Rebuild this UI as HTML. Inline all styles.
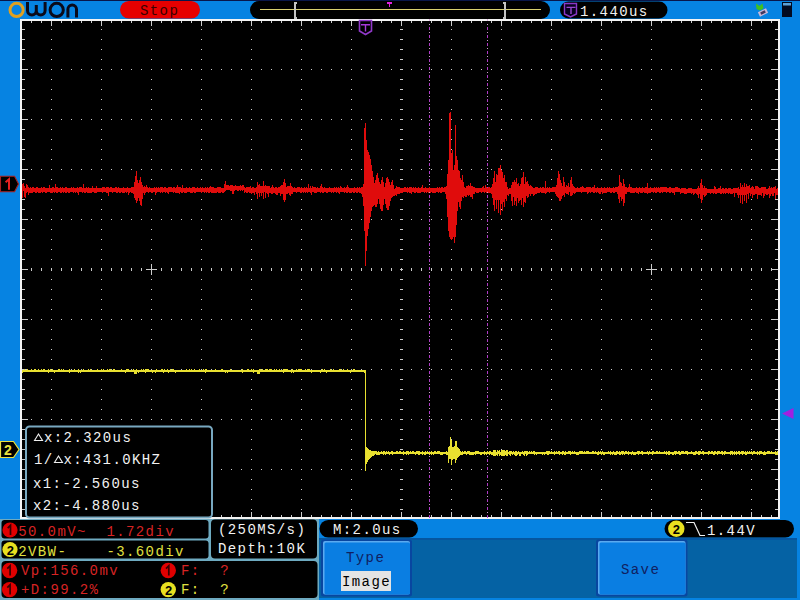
<!DOCTYPE html>
<html><head><meta charset="utf-8"><style>
html,body{margin:0;padding:0;width:800px;height:600px;overflow:hidden;background:#0683e2}
svg{display:block}
text{font-family:'Liberation Mono',monospace;font-size:14px;letter-spacing:1.4px;white-space:pre}
.cd{font-family:'Liberation Sans',sans-serif;font-weight:bold;font-size:13px;letter-spacing:0;text-anchor:middle}
</style></head><body>
<svg width="800" height="600" viewBox="0 0 800 600">
<rect x="0" y="0" width="800" height="1" fill="#08164a"/>
<!-- logo -->
<g fill="none" stroke-width="3">
<circle cx="16.6" cy="9.9" r="6.6" stroke="#e0a020"/>
<path d="M27.5 2v8.5a4.4 4.4 0 0 0 8.8 0V5 M36.3 5v5.5a4.4 4.4 0 0 0 8.8 0V2" stroke="#0a0a1a"/>
<circle cx="56.7" cy="9.9" r="6.6" stroke="#0a0a1a"/>
<path d="M67.9 17.5V9.3a4.3 4.3 0 0 1 8.6 0v8.2" stroke="#0a0a1a"/>
</g>
<!-- Stop pill -->
<rect x="120" y="1" width="80" height="17.5" rx="8.75" fill="#e60000"/>
<text x="140" y="15" fill="#3a0000">Stop</text>
<!-- timebase pill -->
<rect x="250" y="1" width="300" height="18" rx="9" fill="#000"/>
<rect x="260" y="9" width="281" height="1" fill="#d8d070"/>
<path d="M294 2h3v2h-1v13h1v2h-3z" fill="#c4c4c4" shape-rendering="crispEdges"/>
<path d="M503 2h3v17h-3v-2h1v-13h-1z" fill="#c4c4c4" shape-rendering="crispEdges"/>
<path d="M387 2h5v2h-2v3h-1v-3h-2z" fill="#e020e0"/>
<!-- trigger pos pill -->
<rect x="560" y="1.5" width="107.5" height="17" rx="8.5" fill="#000"/>
<path d="M564.5 3.5h12v10.5l-6 3l-6-3z" fill="#080020" stroke="#8a38c8" stroke-width="1.4"/>
<path d="M566.5 6.8h9v1.3h-3.8v5.8h-1.4v-5.8h-3.8z" fill="#9a48d0"/>
<text x="580" y="15.5" fill="#f2f2f2">1.440us</text>
<!-- usb icon -->
<path d="M756 3.5L759.5 6L762.5 3.5L763.5 8.5L760 10.5L756.5 9z" fill="#40c020"/>
<g transform="rotate(-25 763 12.5)"><rect x="758.5" y="10" width="9" height="5" fill="#c8b8d8"/><rect x="760.5" y="11.2" width="5" height="2.6" fill="#403860"/></g>
<!-- battery -->
<rect x="782" y="2" width="10" height="15" fill="#020a20"/>
<rect x="783" y="3" width="8" height="2.5" fill="#5aa0d8"/>

<!-- grid -->
<rect x="20" y="19" width="760" height="500" fill="#f4f4f4"/>
<rect x="22" y="21" width="756" height="496" fill="#000"/>
<path d="M51 29h1v1h-1zM51 39h1v1h-1zM51 49h1v1h-1zM51 59h1v1h-1zM51 69h1v1h-1zM51 79h1v1h-1zM51 89h1v1h-1zM51 99h1v1h-1zM51 109h1v1h-1zM51 119h1v1h-1zM51 129h1v1h-1zM51 139h1v1h-1zM51 149h1v1h-1zM51 159h1v1h-1zM51 169h1v1h-1zM51 179h1v1h-1zM51 189h1v1h-1zM51 199h1v1h-1zM51 209h1v1h-1zM51 219h1v1h-1zM51 229h1v1h-1zM51 239h1v1h-1zM51 249h1v1h-1zM51 259h1v1h-1zM51 269h1v1h-1zM51 279h1v1h-1zM51 289h1v1h-1zM51 299h1v1h-1zM51 309h1v1h-1zM51 319h1v1h-1zM51 329h1v1h-1zM51 339h1v1h-1zM51 349h1v1h-1zM51 359h1v1h-1zM51 369h1v1h-1zM51 379h1v1h-1zM51 389h1v1h-1zM51 399h1v1h-1zM51 409h1v1h-1zM51 419h1v1h-1zM51 429h1v1h-1zM51 439h1v1h-1zM51 449h1v1h-1zM51 459h1v1h-1zM51 469h1v1h-1zM51 479h1v1h-1zM51 489h1v1h-1zM51 499h1v1h-1zM51 509h1v1h-1zM101 29h1v1h-1zM101 39h1v1h-1zM101 49h1v1h-1zM101 59h1v1h-1zM101 69h1v1h-1zM101 79h1v1h-1zM101 89h1v1h-1zM101 99h1v1h-1zM101 109h1v1h-1zM101 119h1v1h-1zM101 129h1v1h-1zM101 139h1v1h-1zM101 149h1v1h-1zM101 159h1v1h-1zM101 169h1v1h-1zM101 179h1v1h-1zM101 189h1v1h-1zM101 199h1v1h-1zM101 209h1v1h-1zM101 219h1v1h-1zM101 229h1v1h-1zM101 239h1v1h-1zM101 249h1v1h-1zM101 259h1v1h-1zM101 269h1v1h-1zM101 279h1v1h-1zM101 289h1v1h-1zM101 299h1v1h-1zM101 309h1v1h-1zM101 319h1v1h-1zM101 329h1v1h-1zM101 339h1v1h-1zM101 349h1v1h-1zM101 359h1v1h-1zM101 369h1v1h-1zM101 379h1v1h-1zM101 389h1v1h-1zM101 399h1v1h-1zM101 409h1v1h-1zM101 419h1v1h-1zM101 429h1v1h-1zM101 439h1v1h-1zM101 449h1v1h-1zM101 459h1v1h-1zM101 469h1v1h-1zM101 479h1v1h-1zM101 489h1v1h-1zM101 499h1v1h-1zM101 509h1v1h-1zM151 29h1v1h-1zM151 39h1v1h-1zM151 49h1v1h-1zM151 59h1v1h-1zM151 69h1v1h-1zM151 79h1v1h-1zM151 89h1v1h-1zM151 99h1v1h-1zM151 109h1v1h-1zM151 119h1v1h-1zM151 129h1v1h-1zM151 139h1v1h-1zM151 149h1v1h-1zM151 159h1v1h-1zM151 169h1v1h-1zM151 179h1v1h-1zM151 189h1v1h-1zM151 199h1v1h-1zM151 209h1v1h-1zM151 219h1v1h-1zM151 229h1v1h-1zM151 239h1v1h-1zM151 249h1v1h-1zM151 259h1v1h-1zM151 269h1v1h-1zM151 279h1v1h-1zM151 289h1v1h-1zM151 299h1v1h-1zM151 309h1v1h-1zM151 319h1v1h-1zM151 329h1v1h-1zM151 339h1v1h-1zM151 349h1v1h-1zM151 359h1v1h-1zM151 369h1v1h-1zM151 379h1v1h-1zM151 389h1v1h-1zM151 399h1v1h-1zM151 409h1v1h-1zM151 419h1v1h-1zM151 429h1v1h-1zM151 439h1v1h-1zM151 449h1v1h-1zM151 459h1v1h-1zM151 469h1v1h-1zM151 479h1v1h-1zM151 489h1v1h-1zM151 499h1v1h-1zM151 509h1v1h-1zM201 29h1v1h-1zM201 39h1v1h-1zM201 49h1v1h-1zM201 59h1v1h-1zM201 69h1v1h-1zM201 79h1v1h-1zM201 89h1v1h-1zM201 99h1v1h-1zM201 109h1v1h-1zM201 119h1v1h-1zM201 129h1v1h-1zM201 139h1v1h-1zM201 149h1v1h-1zM201 159h1v1h-1zM201 169h1v1h-1zM201 179h1v1h-1zM201 189h1v1h-1zM201 199h1v1h-1zM201 209h1v1h-1zM201 219h1v1h-1zM201 229h1v1h-1zM201 239h1v1h-1zM201 249h1v1h-1zM201 259h1v1h-1zM201 269h1v1h-1zM201 279h1v1h-1zM201 289h1v1h-1zM201 299h1v1h-1zM201 309h1v1h-1zM201 319h1v1h-1zM201 329h1v1h-1zM201 339h1v1h-1zM201 349h1v1h-1zM201 359h1v1h-1zM201 369h1v1h-1zM201 379h1v1h-1zM201 389h1v1h-1zM201 399h1v1h-1zM201 409h1v1h-1zM201 419h1v1h-1zM201 429h1v1h-1zM201 439h1v1h-1zM201 449h1v1h-1zM201 459h1v1h-1zM201 469h1v1h-1zM201 479h1v1h-1zM201 489h1v1h-1zM201 499h1v1h-1zM201 509h1v1h-1zM251 29h1v1h-1zM251 39h1v1h-1zM251 49h1v1h-1zM251 59h1v1h-1zM251 69h1v1h-1zM251 79h1v1h-1zM251 89h1v1h-1zM251 99h1v1h-1zM251 109h1v1h-1zM251 119h1v1h-1zM251 129h1v1h-1zM251 139h1v1h-1zM251 149h1v1h-1zM251 159h1v1h-1zM251 169h1v1h-1zM251 179h1v1h-1zM251 189h1v1h-1zM251 199h1v1h-1zM251 209h1v1h-1zM251 219h1v1h-1zM251 229h1v1h-1zM251 239h1v1h-1zM251 249h1v1h-1zM251 259h1v1h-1zM251 269h1v1h-1zM251 279h1v1h-1zM251 289h1v1h-1zM251 299h1v1h-1zM251 309h1v1h-1zM251 319h1v1h-1zM251 329h1v1h-1zM251 339h1v1h-1zM251 349h1v1h-1zM251 359h1v1h-1zM251 369h1v1h-1zM251 379h1v1h-1zM251 389h1v1h-1zM251 399h1v1h-1zM251 409h1v1h-1zM251 419h1v1h-1zM251 429h1v1h-1zM251 439h1v1h-1zM251 449h1v1h-1zM251 459h1v1h-1zM251 469h1v1h-1zM251 479h1v1h-1zM251 489h1v1h-1zM251 499h1v1h-1zM251 509h1v1h-1zM301 29h1v1h-1zM301 39h1v1h-1zM301 49h1v1h-1zM301 59h1v1h-1zM301 69h1v1h-1zM301 79h1v1h-1zM301 89h1v1h-1zM301 99h1v1h-1zM301 109h1v1h-1zM301 119h1v1h-1zM301 129h1v1h-1zM301 139h1v1h-1zM301 149h1v1h-1zM301 159h1v1h-1zM301 169h1v1h-1zM301 179h1v1h-1zM301 189h1v1h-1zM301 199h1v1h-1zM301 209h1v1h-1zM301 219h1v1h-1zM301 229h1v1h-1zM301 239h1v1h-1zM301 249h1v1h-1zM301 259h1v1h-1zM301 269h1v1h-1zM301 279h1v1h-1zM301 289h1v1h-1zM301 299h1v1h-1zM301 309h1v1h-1zM301 319h1v1h-1zM301 329h1v1h-1zM301 339h1v1h-1zM301 349h1v1h-1zM301 359h1v1h-1zM301 369h1v1h-1zM301 379h1v1h-1zM301 389h1v1h-1zM301 399h1v1h-1zM301 409h1v1h-1zM301 419h1v1h-1zM301 429h1v1h-1zM301 439h1v1h-1zM301 449h1v1h-1zM301 459h1v1h-1zM301 469h1v1h-1zM301 479h1v1h-1zM301 489h1v1h-1zM301 499h1v1h-1zM301 509h1v1h-1zM351 29h1v1h-1zM351 39h1v1h-1zM351 49h1v1h-1zM351 59h1v1h-1zM351 69h1v1h-1zM351 79h1v1h-1zM351 89h1v1h-1zM351 99h1v1h-1zM351 109h1v1h-1zM351 119h1v1h-1zM351 129h1v1h-1zM351 139h1v1h-1zM351 149h1v1h-1zM351 159h1v1h-1zM351 169h1v1h-1zM351 179h1v1h-1zM351 189h1v1h-1zM351 199h1v1h-1zM351 209h1v1h-1zM351 219h1v1h-1zM351 229h1v1h-1zM351 239h1v1h-1zM351 249h1v1h-1zM351 259h1v1h-1zM351 269h1v1h-1zM351 279h1v1h-1zM351 289h1v1h-1zM351 299h1v1h-1zM351 309h1v1h-1zM351 319h1v1h-1zM351 329h1v1h-1zM351 339h1v1h-1zM351 349h1v1h-1zM351 359h1v1h-1zM351 369h1v1h-1zM351 379h1v1h-1zM351 389h1v1h-1zM351 399h1v1h-1zM351 409h1v1h-1zM351 419h1v1h-1zM351 429h1v1h-1zM351 439h1v1h-1zM351 449h1v1h-1zM351 459h1v1h-1zM351 469h1v1h-1zM351 479h1v1h-1zM351 489h1v1h-1zM351 499h1v1h-1zM351 509h1v1h-1zM451 29h1v1h-1zM451 39h1v1h-1zM451 49h1v1h-1zM451 59h1v1h-1zM451 69h1v1h-1zM451 79h1v1h-1zM451 89h1v1h-1zM451 99h1v1h-1zM451 109h1v1h-1zM451 119h1v1h-1zM451 129h1v1h-1zM451 139h1v1h-1zM451 149h1v1h-1zM451 159h1v1h-1zM451 169h1v1h-1zM451 179h1v1h-1zM451 189h1v1h-1zM451 199h1v1h-1zM451 209h1v1h-1zM451 219h1v1h-1zM451 229h1v1h-1zM451 239h1v1h-1zM451 249h1v1h-1zM451 259h1v1h-1zM451 269h1v1h-1zM451 279h1v1h-1zM451 289h1v1h-1zM451 299h1v1h-1zM451 309h1v1h-1zM451 319h1v1h-1zM451 329h1v1h-1zM451 339h1v1h-1zM451 349h1v1h-1zM451 359h1v1h-1zM451 369h1v1h-1zM451 379h1v1h-1zM451 389h1v1h-1zM451 399h1v1h-1zM451 409h1v1h-1zM451 419h1v1h-1zM451 429h1v1h-1zM451 439h1v1h-1zM451 449h1v1h-1zM451 459h1v1h-1zM451 469h1v1h-1zM451 479h1v1h-1zM451 489h1v1h-1zM451 499h1v1h-1zM451 509h1v1h-1zM501 29h1v1h-1zM501 39h1v1h-1zM501 49h1v1h-1zM501 59h1v1h-1zM501 69h1v1h-1zM501 79h1v1h-1zM501 89h1v1h-1zM501 99h1v1h-1zM501 109h1v1h-1zM501 119h1v1h-1zM501 129h1v1h-1zM501 139h1v1h-1zM501 149h1v1h-1zM501 159h1v1h-1zM501 169h1v1h-1zM501 179h1v1h-1zM501 189h1v1h-1zM501 199h1v1h-1zM501 209h1v1h-1zM501 219h1v1h-1zM501 229h1v1h-1zM501 239h1v1h-1zM501 249h1v1h-1zM501 259h1v1h-1zM501 269h1v1h-1zM501 279h1v1h-1zM501 289h1v1h-1zM501 299h1v1h-1zM501 309h1v1h-1zM501 319h1v1h-1zM501 329h1v1h-1zM501 339h1v1h-1zM501 349h1v1h-1zM501 359h1v1h-1zM501 369h1v1h-1zM501 379h1v1h-1zM501 389h1v1h-1zM501 399h1v1h-1zM501 409h1v1h-1zM501 419h1v1h-1zM501 429h1v1h-1zM501 439h1v1h-1zM501 449h1v1h-1zM501 459h1v1h-1zM501 469h1v1h-1zM501 479h1v1h-1zM501 489h1v1h-1zM501 499h1v1h-1zM501 509h1v1h-1zM551 29h1v1h-1zM551 39h1v1h-1zM551 49h1v1h-1zM551 59h1v1h-1zM551 69h1v1h-1zM551 79h1v1h-1zM551 89h1v1h-1zM551 99h1v1h-1zM551 109h1v1h-1zM551 119h1v1h-1zM551 129h1v1h-1zM551 139h1v1h-1zM551 149h1v1h-1zM551 159h1v1h-1zM551 169h1v1h-1zM551 179h1v1h-1zM551 189h1v1h-1zM551 199h1v1h-1zM551 209h1v1h-1zM551 219h1v1h-1zM551 229h1v1h-1zM551 239h1v1h-1zM551 249h1v1h-1zM551 259h1v1h-1zM551 269h1v1h-1zM551 279h1v1h-1zM551 289h1v1h-1zM551 299h1v1h-1zM551 309h1v1h-1zM551 319h1v1h-1zM551 329h1v1h-1zM551 339h1v1h-1zM551 349h1v1h-1zM551 359h1v1h-1zM551 369h1v1h-1zM551 379h1v1h-1zM551 389h1v1h-1zM551 399h1v1h-1zM551 409h1v1h-1zM551 419h1v1h-1zM551 429h1v1h-1zM551 439h1v1h-1zM551 449h1v1h-1zM551 459h1v1h-1zM551 469h1v1h-1zM551 479h1v1h-1zM551 489h1v1h-1zM551 499h1v1h-1zM551 509h1v1h-1zM601 29h1v1h-1zM601 39h1v1h-1zM601 49h1v1h-1zM601 59h1v1h-1zM601 69h1v1h-1zM601 79h1v1h-1zM601 89h1v1h-1zM601 99h1v1h-1zM601 109h1v1h-1zM601 119h1v1h-1zM601 129h1v1h-1zM601 139h1v1h-1zM601 149h1v1h-1zM601 159h1v1h-1zM601 169h1v1h-1zM601 179h1v1h-1zM601 189h1v1h-1zM601 199h1v1h-1zM601 209h1v1h-1zM601 219h1v1h-1zM601 229h1v1h-1zM601 239h1v1h-1zM601 249h1v1h-1zM601 259h1v1h-1zM601 269h1v1h-1zM601 279h1v1h-1zM601 289h1v1h-1zM601 299h1v1h-1zM601 309h1v1h-1zM601 319h1v1h-1zM601 329h1v1h-1zM601 339h1v1h-1zM601 349h1v1h-1zM601 359h1v1h-1zM601 369h1v1h-1zM601 379h1v1h-1zM601 389h1v1h-1zM601 399h1v1h-1zM601 409h1v1h-1zM601 419h1v1h-1zM601 429h1v1h-1zM601 439h1v1h-1zM601 449h1v1h-1zM601 459h1v1h-1zM601 469h1v1h-1zM601 479h1v1h-1zM601 489h1v1h-1zM601 499h1v1h-1zM601 509h1v1h-1zM651 29h1v1h-1zM651 39h1v1h-1zM651 49h1v1h-1zM651 59h1v1h-1zM651 69h1v1h-1zM651 79h1v1h-1zM651 89h1v1h-1zM651 99h1v1h-1zM651 109h1v1h-1zM651 119h1v1h-1zM651 129h1v1h-1zM651 139h1v1h-1zM651 149h1v1h-1zM651 159h1v1h-1zM651 169h1v1h-1zM651 179h1v1h-1zM651 189h1v1h-1zM651 199h1v1h-1zM651 209h1v1h-1zM651 219h1v1h-1zM651 229h1v1h-1zM651 239h1v1h-1zM651 249h1v1h-1zM651 259h1v1h-1zM651 269h1v1h-1zM651 279h1v1h-1zM651 289h1v1h-1zM651 299h1v1h-1zM651 309h1v1h-1zM651 319h1v1h-1zM651 329h1v1h-1zM651 339h1v1h-1zM651 349h1v1h-1zM651 359h1v1h-1zM651 369h1v1h-1zM651 379h1v1h-1zM651 389h1v1h-1zM651 399h1v1h-1zM651 409h1v1h-1zM651 419h1v1h-1zM651 429h1v1h-1zM651 439h1v1h-1zM651 449h1v1h-1zM651 459h1v1h-1zM651 469h1v1h-1zM651 479h1v1h-1zM651 489h1v1h-1zM651 499h1v1h-1zM651 509h1v1h-1zM701 29h1v1h-1zM701 39h1v1h-1zM701 49h1v1h-1zM701 59h1v1h-1zM701 69h1v1h-1zM701 79h1v1h-1zM701 89h1v1h-1zM701 99h1v1h-1zM701 109h1v1h-1zM701 119h1v1h-1zM701 129h1v1h-1zM701 139h1v1h-1zM701 149h1v1h-1zM701 159h1v1h-1zM701 169h1v1h-1zM701 179h1v1h-1zM701 189h1v1h-1zM701 199h1v1h-1zM701 209h1v1h-1zM701 219h1v1h-1zM701 229h1v1h-1zM701 239h1v1h-1zM701 249h1v1h-1zM701 259h1v1h-1zM701 269h1v1h-1zM701 279h1v1h-1zM701 289h1v1h-1zM701 299h1v1h-1zM701 309h1v1h-1zM701 319h1v1h-1zM701 329h1v1h-1zM701 339h1v1h-1zM701 349h1v1h-1zM701 359h1v1h-1zM701 369h1v1h-1zM701 379h1v1h-1zM701 389h1v1h-1zM701 399h1v1h-1zM701 409h1v1h-1zM701 419h1v1h-1zM701 429h1v1h-1zM701 439h1v1h-1zM701 449h1v1h-1zM701 459h1v1h-1zM701 469h1v1h-1zM701 479h1v1h-1zM701 489h1v1h-1zM701 499h1v1h-1zM701 509h1v1h-1zM751 29h1v1h-1zM751 39h1v1h-1zM751 49h1v1h-1zM751 59h1v1h-1zM751 69h1v1h-1zM751 79h1v1h-1zM751 89h1v1h-1zM751 99h1v1h-1zM751 109h1v1h-1zM751 119h1v1h-1zM751 129h1v1h-1zM751 139h1v1h-1zM751 149h1v1h-1zM751 159h1v1h-1zM751 169h1v1h-1zM751 179h1v1h-1zM751 189h1v1h-1zM751 199h1v1h-1zM751 209h1v1h-1zM751 219h1v1h-1zM751 229h1v1h-1zM751 239h1v1h-1zM751 249h1v1h-1zM751 259h1v1h-1zM751 269h1v1h-1zM751 279h1v1h-1zM751 289h1v1h-1zM751 299h1v1h-1zM751 309h1v1h-1zM751 319h1v1h-1zM751 329h1v1h-1zM751 339h1v1h-1zM751 349h1v1h-1zM751 359h1v1h-1zM751 369h1v1h-1zM751 379h1v1h-1zM751 389h1v1h-1zM751 399h1v1h-1zM751 409h1v1h-1zM751 419h1v1h-1zM751 429h1v1h-1zM751 439h1v1h-1zM751 449h1v1h-1zM751 459h1v1h-1zM751 469h1v1h-1zM751 479h1v1h-1zM751 489h1v1h-1zM751 499h1v1h-1zM751 509h1v1h-1zM31 69h1v1h-1zM41 69h1v1h-1zM61 69h1v1h-1zM71 69h1v1h-1zM81 69h1v1h-1zM91 69h1v1h-1zM111 69h1v1h-1zM121 69h1v1h-1zM131 69h1v1h-1zM141 69h1v1h-1zM161 69h1v1h-1zM171 69h1v1h-1zM181 69h1v1h-1zM191 69h1v1h-1zM211 69h1v1h-1zM221 69h1v1h-1zM231 69h1v1h-1zM241 69h1v1h-1zM261 69h1v1h-1zM271 69h1v1h-1zM281 69h1v1h-1zM291 69h1v1h-1zM311 69h1v1h-1zM321 69h1v1h-1zM331 69h1v1h-1zM341 69h1v1h-1zM361 69h1v1h-1zM371 69h1v1h-1zM381 69h1v1h-1zM391 69h1v1h-1zM411 69h1v1h-1zM421 69h1v1h-1zM431 69h1v1h-1zM441 69h1v1h-1zM461 69h1v1h-1zM471 69h1v1h-1zM481 69h1v1h-1zM491 69h1v1h-1zM511 69h1v1h-1zM521 69h1v1h-1zM531 69h1v1h-1zM541 69h1v1h-1zM561 69h1v1h-1zM571 69h1v1h-1zM581 69h1v1h-1zM591 69h1v1h-1zM611 69h1v1h-1zM621 69h1v1h-1zM631 69h1v1h-1zM641 69h1v1h-1zM661 69h1v1h-1zM671 69h1v1h-1zM681 69h1v1h-1zM691 69h1v1h-1zM711 69h1v1h-1zM721 69h1v1h-1zM731 69h1v1h-1zM741 69h1v1h-1zM761 69h1v1h-1zM771 69h1v1h-1zM31 119h1v1h-1zM41 119h1v1h-1zM61 119h1v1h-1zM71 119h1v1h-1zM81 119h1v1h-1zM91 119h1v1h-1zM111 119h1v1h-1zM121 119h1v1h-1zM131 119h1v1h-1zM141 119h1v1h-1zM161 119h1v1h-1zM171 119h1v1h-1zM181 119h1v1h-1zM191 119h1v1h-1zM211 119h1v1h-1zM221 119h1v1h-1zM231 119h1v1h-1zM241 119h1v1h-1zM261 119h1v1h-1zM271 119h1v1h-1zM281 119h1v1h-1zM291 119h1v1h-1zM311 119h1v1h-1zM321 119h1v1h-1zM331 119h1v1h-1zM341 119h1v1h-1zM361 119h1v1h-1zM371 119h1v1h-1zM381 119h1v1h-1zM391 119h1v1h-1zM411 119h1v1h-1zM421 119h1v1h-1zM431 119h1v1h-1zM441 119h1v1h-1zM461 119h1v1h-1zM471 119h1v1h-1zM481 119h1v1h-1zM491 119h1v1h-1zM511 119h1v1h-1zM521 119h1v1h-1zM531 119h1v1h-1zM541 119h1v1h-1zM561 119h1v1h-1zM571 119h1v1h-1zM581 119h1v1h-1zM591 119h1v1h-1zM611 119h1v1h-1zM621 119h1v1h-1zM631 119h1v1h-1zM641 119h1v1h-1zM661 119h1v1h-1zM671 119h1v1h-1zM681 119h1v1h-1zM691 119h1v1h-1zM711 119h1v1h-1zM721 119h1v1h-1zM731 119h1v1h-1zM741 119h1v1h-1zM761 119h1v1h-1zM771 119h1v1h-1zM31 169h1v1h-1zM41 169h1v1h-1zM61 169h1v1h-1zM71 169h1v1h-1zM81 169h1v1h-1zM91 169h1v1h-1zM111 169h1v1h-1zM121 169h1v1h-1zM131 169h1v1h-1zM141 169h1v1h-1zM161 169h1v1h-1zM171 169h1v1h-1zM181 169h1v1h-1zM191 169h1v1h-1zM211 169h1v1h-1zM221 169h1v1h-1zM231 169h1v1h-1zM241 169h1v1h-1zM261 169h1v1h-1zM271 169h1v1h-1zM281 169h1v1h-1zM291 169h1v1h-1zM311 169h1v1h-1zM321 169h1v1h-1zM331 169h1v1h-1zM341 169h1v1h-1zM361 169h1v1h-1zM371 169h1v1h-1zM381 169h1v1h-1zM391 169h1v1h-1zM411 169h1v1h-1zM421 169h1v1h-1zM431 169h1v1h-1zM441 169h1v1h-1zM461 169h1v1h-1zM471 169h1v1h-1zM481 169h1v1h-1zM491 169h1v1h-1zM511 169h1v1h-1zM521 169h1v1h-1zM531 169h1v1h-1zM541 169h1v1h-1zM561 169h1v1h-1zM571 169h1v1h-1zM581 169h1v1h-1zM591 169h1v1h-1zM611 169h1v1h-1zM621 169h1v1h-1zM631 169h1v1h-1zM641 169h1v1h-1zM661 169h1v1h-1zM671 169h1v1h-1zM681 169h1v1h-1zM691 169h1v1h-1zM711 169h1v1h-1zM721 169h1v1h-1zM731 169h1v1h-1zM741 169h1v1h-1zM761 169h1v1h-1zM771 169h1v1h-1zM31 219h1v1h-1zM41 219h1v1h-1zM61 219h1v1h-1zM71 219h1v1h-1zM81 219h1v1h-1zM91 219h1v1h-1zM111 219h1v1h-1zM121 219h1v1h-1zM131 219h1v1h-1zM141 219h1v1h-1zM161 219h1v1h-1zM171 219h1v1h-1zM181 219h1v1h-1zM191 219h1v1h-1zM211 219h1v1h-1zM221 219h1v1h-1zM231 219h1v1h-1zM241 219h1v1h-1zM261 219h1v1h-1zM271 219h1v1h-1zM281 219h1v1h-1zM291 219h1v1h-1zM311 219h1v1h-1zM321 219h1v1h-1zM331 219h1v1h-1zM341 219h1v1h-1zM361 219h1v1h-1zM371 219h1v1h-1zM381 219h1v1h-1zM391 219h1v1h-1zM411 219h1v1h-1zM421 219h1v1h-1zM431 219h1v1h-1zM441 219h1v1h-1zM461 219h1v1h-1zM471 219h1v1h-1zM481 219h1v1h-1zM491 219h1v1h-1zM511 219h1v1h-1zM521 219h1v1h-1zM531 219h1v1h-1zM541 219h1v1h-1zM561 219h1v1h-1zM571 219h1v1h-1zM581 219h1v1h-1zM591 219h1v1h-1zM611 219h1v1h-1zM621 219h1v1h-1zM631 219h1v1h-1zM641 219h1v1h-1zM661 219h1v1h-1zM671 219h1v1h-1zM681 219h1v1h-1zM691 219h1v1h-1zM711 219h1v1h-1zM721 219h1v1h-1zM731 219h1v1h-1zM741 219h1v1h-1zM761 219h1v1h-1zM771 219h1v1h-1zM31 319h1v1h-1zM41 319h1v1h-1zM61 319h1v1h-1zM71 319h1v1h-1zM81 319h1v1h-1zM91 319h1v1h-1zM111 319h1v1h-1zM121 319h1v1h-1zM131 319h1v1h-1zM141 319h1v1h-1zM161 319h1v1h-1zM171 319h1v1h-1zM181 319h1v1h-1zM191 319h1v1h-1zM211 319h1v1h-1zM221 319h1v1h-1zM231 319h1v1h-1zM241 319h1v1h-1zM261 319h1v1h-1zM271 319h1v1h-1zM281 319h1v1h-1zM291 319h1v1h-1zM311 319h1v1h-1zM321 319h1v1h-1zM331 319h1v1h-1zM341 319h1v1h-1zM361 319h1v1h-1zM371 319h1v1h-1zM381 319h1v1h-1zM391 319h1v1h-1zM411 319h1v1h-1zM421 319h1v1h-1zM431 319h1v1h-1zM441 319h1v1h-1zM461 319h1v1h-1zM471 319h1v1h-1zM481 319h1v1h-1zM491 319h1v1h-1zM511 319h1v1h-1zM521 319h1v1h-1zM531 319h1v1h-1zM541 319h1v1h-1zM561 319h1v1h-1zM571 319h1v1h-1zM581 319h1v1h-1zM591 319h1v1h-1zM611 319h1v1h-1zM621 319h1v1h-1zM631 319h1v1h-1zM641 319h1v1h-1zM661 319h1v1h-1zM671 319h1v1h-1zM681 319h1v1h-1zM691 319h1v1h-1zM711 319h1v1h-1zM721 319h1v1h-1zM731 319h1v1h-1zM741 319h1v1h-1zM761 319h1v1h-1zM771 319h1v1h-1zM31 369h1v1h-1zM41 369h1v1h-1zM61 369h1v1h-1zM71 369h1v1h-1zM81 369h1v1h-1zM91 369h1v1h-1zM111 369h1v1h-1zM121 369h1v1h-1zM131 369h1v1h-1zM141 369h1v1h-1zM161 369h1v1h-1zM171 369h1v1h-1zM181 369h1v1h-1zM191 369h1v1h-1zM211 369h1v1h-1zM221 369h1v1h-1zM231 369h1v1h-1zM241 369h1v1h-1zM261 369h1v1h-1zM271 369h1v1h-1zM281 369h1v1h-1zM291 369h1v1h-1zM311 369h1v1h-1zM321 369h1v1h-1zM331 369h1v1h-1zM341 369h1v1h-1zM361 369h1v1h-1zM371 369h1v1h-1zM381 369h1v1h-1zM391 369h1v1h-1zM411 369h1v1h-1zM421 369h1v1h-1zM431 369h1v1h-1zM441 369h1v1h-1zM461 369h1v1h-1zM471 369h1v1h-1zM481 369h1v1h-1zM491 369h1v1h-1zM511 369h1v1h-1zM521 369h1v1h-1zM531 369h1v1h-1zM541 369h1v1h-1zM561 369h1v1h-1zM571 369h1v1h-1zM581 369h1v1h-1zM591 369h1v1h-1zM611 369h1v1h-1zM621 369h1v1h-1zM631 369h1v1h-1zM641 369h1v1h-1zM661 369h1v1h-1zM671 369h1v1h-1zM681 369h1v1h-1zM691 369h1v1h-1zM711 369h1v1h-1zM721 369h1v1h-1zM731 369h1v1h-1zM741 369h1v1h-1zM761 369h1v1h-1zM771 369h1v1h-1zM31 419h1v1h-1zM41 419h1v1h-1zM61 419h1v1h-1zM71 419h1v1h-1zM81 419h1v1h-1zM91 419h1v1h-1zM111 419h1v1h-1zM121 419h1v1h-1zM131 419h1v1h-1zM141 419h1v1h-1zM161 419h1v1h-1zM171 419h1v1h-1zM181 419h1v1h-1zM191 419h1v1h-1zM211 419h1v1h-1zM221 419h1v1h-1zM231 419h1v1h-1zM241 419h1v1h-1zM261 419h1v1h-1zM271 419h1v1h-1zM281 419h1v1h-1zM291 419h1v1h-1zM311 419h1v1h-1zM321 419h1v1h-1zM331 419h1v1h-1zM341 419h1v1h-1zM361 419h1v1h-1zM371 419h1v1h-1zM381 419h1v1h-1zM391 419h1v1h-1zM411 419h1v1h-1zM421 419h1v1h-1zM431 419h1v1h-1zM441 419h1v1h-1zM461 419h1v1h-1zM471 419h1v1h-1zM481 419h1v1h-1zM491 419h1v1h-1zM511 419h1v1h-1zM521 419h1v1h-1zM531 419h1v1h-1zM541 419h1v1h-1zM561 419h1v1h-1zM571 419h1v1h-1zM581 419h1v1h-1zM591 419h1v1h-1zM611 419h1v1h-1zM621 419h1v1h-1zM631 419h1v1h-1zM641 419h1v1h-1zM661 419h1v1h-1zM671 419h1v1h-1zM681 419h1v1h-1zM691 419h1v1h-1zM711 419h1v1h-1zM721 419h1v1h-1zM731 419h1v1h-1zM741 419h1v1h-1zM761 419h1v1h-1zM771 419h1v1h-1zM31 469h1v1h-1zM41 469h1v1h-1zM61 469h1v1h-1zM71 469h1v1h-1zM81 469h1v1h-1zM91 469h1v1h-1zM111 469h1v1h-1zM121 469h1v1h-1zM131 469h1v1h-1zM141 469h1v1h-1zM161 469h1v1h-1zM171 469h1v1h-1zM181 469h1v1h-1zM191 469h1v1h-1zM211 469h1v1h-1zM221 469h1v1h-1zM231 469h1v1h-1zM241 469h1v1h-1zM261 469h1v1h-1zM271 469h1v1h-1zM281 469h1v1h-1zM291 469h1v1h-1zM311 469h1v1h-1zM321 469h1v1h-1zM331 469h1v1h-1zM341 469h1v1h-1zM361 469h1v1h-1zM371 469h1v1h-1zM381 469h1v1h-1zM391 469h1v1h-1zM411 469h1v1h-1zM421 469h1v1h-1zM431 469h1v1h-1zM441 469h1v1h-1zM461 469h1v1h-1zM471 469h1v1h-1zM481 469h1v1h-1zM491 469h1v1h-1zM511 469h1v1h-1zM521 469h1v1h-1zM531 469h1v1h-1zM541 469h1v1h-1zM561 469h1v1h-1zM571 469h1v1h-1zM581 469h1v1h-1zM591 469h1v1h-1zM611 469h1v1h-1zM621 469h1v1h-1zM631 469h1v1h-1zM641 469h1v1h-1zM661 469h1v1h-1zM671 469h1v1h-1zM681 469h1v1h-1zM691 469h1v1h-1zM711 469h1v1h-1zM721 469h1v1h-1zM731 469h1v1h-1zM741 469h1v1h-1zM761 469h1v1h-1zM771 469h1v1h-1zM400 29h3v1h-3zM400 39h3v1h-3zM400 49h3v1h-3zM400 59h3v1h-3zM400 69h3v1h-3zM400 79h3v1h-3zM400 89h3v1h-3zM400 99h3v1h-3zM400 109h3v1h-3zM400 119h3v1h-3zM400 129h3v1h-3zM400 139h3v1h-3zM400 149h3v1h-3zM400 159h3v1h-3zM400 169h3v1h-3zM400 179h3v1h-3zM400 189h3v1h-3zM400 199h3v1h-3zM400 209h3v1h-3zM400 219h3v1h-3zM400 229h3v1h-3zM400 239h3v1h-3zM400 249h3v1h-3zM400 259h3v1h-3zM400 279h3v1h-3zM400 289h3v1h-3zM400 299h3v1h-3zM400 309h3v1h-3zM400 319h3v1h-3zM400 329h3v1h-3zM400 339h3v1h-3zM400 349h3v1h-3zM400 359h3v1h-3zM400 369h3v1h-3zM400 379h3v1h-3zM400 389h3v1h-3zM400 399h3v1h-3zM400 409h3v1h-3zM400 419h3v1h-3zM400 429h3v1h-3zM400 439h3v1h-3zM400 449h3v1h-3zM400 459h3v1h-3zM400 469h3v1h-3zM400 479h3v1h-3zM400 489h3v1h-3zM400 499h3v1h-3zM400 509h3v1h-3zM31 268h1v3h-1zM41 268h1v3h-1zM51 268h1v3h-1zM61 268h1v3h-1zM71 268h1v3h-1zM81 268h1v3h-1zM91 268h1v3h-1zM101 268h1v3h-1zM111 268h1v3h-1zM121 268h1v3h-1zM131 268h1v3h-1zM141 268h1v3h-1zM151 268h1v3h-1zM161 268h1v3h-1zM171 268h1v3h-1zM181 268h1v3h-1zM191 268h1v3h-1zM201 268h1v3h-1zM211 268h1v3h-1zM221 268h1v3h-1zM231 268h1v3h-1zM241 268h1v3h-1zM251 268h1v3h-1zM261 268h1v3h-1zM271 268h1v3h-1zM281 268h1v3h-1zM291 268h1v3h-1zM301 268h1v3h-1zM311 268h1v3h-1zM321 268h1v3h-1zM331 268h1v3h-1zM341 268h1v3h-1zM351 268h1v3h-1zM361 268h1v3h-1zM371 268h1v3h-1zM381 268h1v3h-1zM391 268h1v3h-1zM411 268h1v3h-1zM421 268h1v3h-1zM431 268h1v3h-1zM441 268h1v3h-1zM451 268h1v3h-1zM461 268h1v3h-1zM471 268h1v3h-1zM481 268h1v3h-1zM491 268h1v3h-1zM501 268h1v3h-1zM511 268h1v3h-1zM521 268h1v3h-1zM531 268h1v3h-1zM541 268h1v3h-1zM551 268h1v3h-1zM561 268h1v3h-1zM571 268h1v3h-1zM581 268h1v3h-1zM591 268h1v3h-1zM601 268h1v3h-1zM611 268h1v3h-1zM621 268h1v3h-1zM631 268h1v3h-1zM641 268h1v3h-1zM651 268h1v3h-1zM661 268h1v3h-1zM671 268h1v3h-1zM681 268h1v3h-1zM691 268h1v3h-1zM701 268h1v3h-1zM711 268h1v3h-1zM721 268h1v3h-1zM731 268h1v3h-1zM741 268h1v3h-1zM751 268h1v3h-1zM761 268h1v3h-1zM771 268h1v3h-1zM400 269h3v1h-3zM401 268h1v3h-1zM146 269h11v1h-11zM151 264h1v11h-1zM646 269h11v1h-11zM651 264h1v11h-1zM31 21h1v2h-1zM31 515h1v2h-1zM41 21h1v2h-1zM41 515h1v2h-1zM51 21h1v5h-1zM51 512h1v5h-1zM61 21h1v2h-1zM61 515h1v2h-1zM71 21h1v2h-1zM71 515h1v2h-1zM81 21h1v2h-1zM81 515h1v2h-1zM91 21h1v2h-1zM91 515h1v2h-1zM101 21h1v5h-1zM101 512h1v5h-1zM111 21h1v2h-1zM111 515h1v2h-1zM121 21h1v2h-1zM121 515h1v2h-1zM131 21h1v2h-1zM131 515h1v2h-1zM141 21h1v2h-1zM141 515h1v2h-1zM151 21h1v5h-1zM151 512h1v5h-1zM161 21h1v2h-1zM161 515h1v2h-1zM171 21h1v2h-1zM171 515h1v2h-1zM181 21h1v2h-1zM181 515h1v2h-1zM191 21h1v2h-1zM191 515h1v2h-1zM201 21h1v5h-1zM201 512h1v5h-1zM211 21h1v2h-1zM211 515h1v2h-1zM221 21h1v2h-1zM221 515h1v2h-1zM231 21h1v2h-1zM231 515h1v2h-1zM241 21h1v2h-1zM241 515h1v2h-1zM251 21h1v5h-1zM251 512h1v5h-1zM261 21h1v2h-1zM261 515h1v2h-1zM271 21h1v2h-1zM271 515h1v2h-1zM281 21h1v2h-1zM281 515h1v2h-1zM291 21h1v2h-1zM291 515h1v2h-1zM301 21h1v5h-1zM301 512h1v5h-1zM311 21h1v2h-1zM311 515h1v2h-1zM321 21h1v2h-1zM321 515h1v2h-1zM331 21h1v2h-1zM331 515h1v2h-1zM341 21h1v2h-1zM341 515h1v2h-1zM351 21h1v5h-1zM351 512h1v5h-1zM361 21h1v2h-1zM361 515h1v2h-1zM371 21h1v2h-1zM371 515h1v2h-1zM381 21h1v2h-1zM381 515h1v2h-1zM391 21h1v2h-1zM391 515h1v2h-1zM401 21h1v5h-1zM401 512h1v5h-1zM411 21h1v2h-1zM411 515h1v2h-1zM421 21h1v2h-1zM421 515h1v2h-1zM431 21h1v2h-1zM431 515h1v2h-1zM441 21h1v2h-1zM441 515h1v2h-1zM451 21h1v5h-1zM451 512h1v5h-1zM461 21h1v2h-1zM461 515h1v2h-1zM471 21h1v2h-1zM471 515h1v2h-1zM481 21h1v2h-1zM481 515h1v2h-1zM491 21h1v2h-1zM491 515h1v2h-1zM501 21h1v5h-1zM501 512h1v5h-1zM511 21h1v2h-1zM511 515h1v2h-1zM521 21h1v2h-1zM521 515h1v2h-1zM531 21h1v2h-1zM531 515h1v2h-1zM541 21h1v2h-1zM541 515h1v2h-1zM551 21h1v5h-1zM551 512h1v5h-1zM561 21h1v2h-1zM561 515h1v2h-1zM571 21h1v2h-1zM571 515h1v2h-1zM581 21h1v2h-1zM581 515h1v2h-1zM591 21h1v2h-1zM591 515h1v2h-1zM601 21h1v5h-1zM601 512h1v5h-1zM611 21h1v2h-1zM611 515h1v2h-1zM621 21h1v2h-1zM621 515h1v2h-1zM631 21h1v2h-1zM631 515h1v2h-1zM641 21h1v2h-1zM641 515h1v2h-1zM651 21h1v5h-1zM651 512h1v5h-1zM661 21h1v2h-1zM661 515h1v2h-1zM671 21h1v2h-1zM671 515h1v2h-1zM681 21h1v2h-1zM681 515h1v2h-1zM691 21h1v2h-1zM691 515h1v2h-1zM701 21h1v5h-1zM701 512h1v5h-1zM711 21h1v2h-1zM711 515h1v2h-1zM721 21h1v2h-1zM721 515h1v2h-1zM731 21h1v2h-1zM731 515h1v2h-1zM741 21h1v2h-1zM741 515h1v2h-1zM751 21h1v5h-1zM751 512h1v5h-1zM761 21h1v2h-1zM761 515h1v2h-1zM771 21h1v2h-1zM771 515h1v2h-1zM22 29h3v1h-3zM775 29h3v1h-3zM22 39h3v1h-3zM775 39h3v1h-3zM22 49h3v1h-3zM775 49h3v1h-3zM22 59h3v1h-3zM775 59h3v1h-3zM22 69h6v1h-6zM771 69h7v1h-7zM22 79h3v1h-3zM775 79h3v1h-3zM22 89h3v1h-3zM775 89h3v1h-3zM22 99h3v1h-3zM775 99h3v1h-3zM22 109h3v1h-3zM775 109h3v1h-3zM22 119h6v1h-6zM771 119h7v1h-7zM22 129h3v1h-3zM775 129h3v1h-3zM22 139h3v1h-3zM775 139h3v1h-3zM22 149h3v1h-3zM775 149h3v1h-3zM22 159h3v1h-3zM775 159h3v1h-3zM22 169h6v1h-6zM771 169h7v1h-7zM22 179h3v1h-3zM775 179h3v1h-3zM22 189h3v1h-3zM775 189h3v1h-3zM22 199h3v1h-3zM775 199h3v1h-3zM22 209h3v1h-3zM775 209h3v1h-3zM22 219h6v1h-6zM771 219h7v1h-7zM22 229h3v1h-3zM775 229h3v1h-3zM22 239h3v1h-3zM775 239h3v1h-3zM22 249h3v1h-3zM775 249h3v1h-3zM22 259h3v1h-3zM775 259h3v1h-3zM22 269h6v1h-6zM771 269h7v1h-7zM22 279h3v1h-3zM775 279h3v1h-3zM22 289h3v1h-3zM775 289h3v1h-3zM22 299h3v1h-3zM775 299h3v1h-3zM22 309h3v1h-3zM775 309h3v1h-3zM22 319h6v1h-6zM771 319h7v1h-7zM22 329h3v1h-3zM775 329h3v1h-3zM22 339h3v1h-3zM775 339h3v1h-3zM22 349h3v1h-3zM775 349h3v1h-3zM22 359h3v1h-3zM775 359h3v1h-3zM22 369h6v1h-6zM771 369h7v1h-7zM22 379h3v1h-3zM775 379h3v1h-3zM22 389h3v1h-3zM775 389h3v1h-3zM22 399h3v1h-3zM775 399h3v1h-3zM22 409h3v1h-3zM775 409h3v1h-3zM22 419h6v1h-6zM771 419h7v1h-7zM22 429h3v1h-3zM775 429h3v1h-3zM22 439h3v1h-3zM775 439h3v1h-3zM22 449h3v1h-3zM775 449h3v1h-3zM22 459h3v1h-3zM775 459h3v1h-3zM22 469h6v1h-6zM771 469h7v1h-7zM22 479h3v1h-3zM775 479h3v1h-3zM22 489h3v1h-3zM775 489h3v1h-3zM22 499h3v1h-3zM775 499h3v1h-3zM22 509h3v1h-3zM775 509h3v1h-3z" fill="#cccccc" shape-rendering="crispEdges"/>
<!-- cursors -->
<path d="M429 27h1v3h-1zM429 35h1v3h-1zM429 43h1v3h-1zM429 51h1v3h-1zM429 59h1v3h-1zM429 67h1v3h-1zM429 75h1v3h-1zM429 83h1v3h-1zM429 91h1v3h-1zM429 99h1v3h-1zM429 107h1v3h-1zM429 115h1v3h-1zM429 123h1v3h-1zM429 131h1v3h-1zM429 139h1v3h-1zM429 147h1v3h-1zM429 155h1v3h-1zM429 163h1v3h-1zM429 171h1v3h-1zM429 179h1v3h-1zM429 187h1v3h-1zM429 195h1v3h-1zM429 203h1v3h-1zM429 211h1v3h-1zM429 219h1v3h-1zM429 227h1v3h-1zM429 235h1v3h-1zM429 243h1v3h-1zM429 251h1v3h-1zM429 259h1v3h-1zM429 267h1v3h-1zM429 275h1v3h-1zM429 283h1v3h-1zM429 291h1v3h-1zM429 299h1v3h-1zM429 307h1v3h-1zM429 315h1v3h-1zM429 323h1v3h-1zM429 331h1v3h-1zM429 339h1v3h-1zM429 347h1v3h-1zM429 355h1v3h-1zM429 363h1v3h-1zM429 371h1v3h-1zM429 379h1v3h-1zM429 387h1v3h-1zM429 395h1v3h-1zM429 403h1v3h-1zM429 411h1v3h-1zM429 419h1v3h-1zM429 427h1v3h-1zM429 435h1v3h-1zM429 443h1v3h-1zM429 451h1v3h-1zM429 459h1v3h-1zM429 467h1v3h-1zM429 475h1v3h-1zM429 483h1v3h-1zM429 491h1v3h-1zM429 499h1v3h-1zM429 507h1v3h-1zM429 515h1v3h-1zM487 27h1v3h-1zM487 35h1v3h-1zM487 43h1v3h-1zM487 51h1v3h-1zM487 59h1v3h-1zM487 67h1v3h-1zM487 75h1v3h-1zM487 83h1v3h-1zM487 91h1v3h-1zM487 99h1v3h-1zM487 107h1v3h-1zM487 115h1v3h-1zM487 123h1v3h-1zM487 131h1v3h-1zM487 139h1v3h-1zM487 147h1v3h-1zM487 155h1v3h-1zM487 163h1v3h-1zM487 171h1v3h-1zM487 179h1v3h-1zM487 187h1v3h-1zM487 195h1v3h-1zM487 203h1v3h-1zM487 211h1v3h-1zM487 219h1v3h-1zM487 227h1v3h-1zM487 235h1v3h-1zM487 243h1v3h-1zM487 251h1v3h-1zM487 259h1v3h-1zM487 267h1v3h-1zM487 275h1v3h-1zM487 283h1v3h-1zM487 291h1v3h-1zM487 299h1v3h-1zM487 307h1v3h-1zM487 315h1v3h-1zM487 323h1v3h-1zM487 331h1v3h-1zM487 339h1v3h-1zM487 347h1v3h-1zM487 355h1v3h-1zM487 363h1v3h-1zM487 371h1v3h-1zM487 379h1v3h-1zM487 387h1v3h-1zM487 395h1v3h-1zM487 403h1v3h-1zM487 411h1v3h-1zM487 419h1v3h-1zM487 427h1v3h-1zM487 435h1v3h-1zM487 443h1v3h-1zM487 451h1v3h-1zM487 459h1v3h-1zM487 467h1v3h-1zM487 475h1v3h-1zM487 483h1v3h-1zM487 491h1v3h-1zM487 499h1v3h-1zM487 507h1v3h-1zM487 515h1v3h-1z" fill="#b038c8" shape-rendering="crispEdges"/>
<path d="M429 24h1v1h-1zM429 32h1v1h-1zM429 40h1v1h-1zM429 48h1v1h-1zM429 56h1v1h-1zM429 64h1v1h-1zM429 72h1v1h-1zM429 80h1v1h-1zM429 88h1v1h-1zM429 96h1v1h-1zM429 104h1v1h-1zM429 112h1v1h-1zM429 120h1v1h-1zM429 128h1v1h-1zM429 136h1v1h-1zM429 144h1v1h-1zM429 152h1v1h-1zM429 160h1v1h-1zM429 168h1v1h-1zM429 176h1v1h-1zM429 184h1v1h-1zM429 192h1v1h-1zM429 200h1v1h-1zM429 208h1v1h-1zM429 216h1v1h-1zM429 224h1v1h-1zM429 232h1v1h-1zM429 240h1v1h-1zM429 248h1v1h-1zM429 256h1v1h-1zM429 264h1v1h-1zM429 272h1v1h-1zM429 280h1v1h-1zM429 288h1v1h-1zM429 296h1v1h-1zM429 304h1v1h-1zM429 312h1v1h-1zM429 320h1v1h-1zM429 328h1v1h-1zM429 336h1v1h-1zM429 344h1v1h-1zM429 352h1v1h-1zM429 360h1v1h-1zM429 368h1v1h-1zM429 376h1v1h-1zM429 384h1v1h-1zM429 392h1v1h-1zM429 400h1v1h-1zM429 408h1v1h-1zM429 416h1v1h-1zM429 424h1v1h-1zM429 432h1v1h-1zM429 440h1v1h-1zM429 448h1v1h-1zM429 456h1v1h-1zM429 464h1v1h-1zM429 472h1v1h-1zM429 480h1v1h-1zM429 488h1v1h-1zM429 496h1v1h-1zM429 504h1v1h-1zM429 512h1v1h-1zM487 24h1v1h-1zM487 32h1v1h-1zM487 40h1v1h-1zM487 48h1v1h-1zM487 56h1v1h-1zM487 64h1v1h-1zM487 72h1v1h-1zM487 80h1v1h-1zM487 88h1v1h-1zM487 96h1v1h-1zM487 104h1v1h-1zM487 112h1v1h-1zM487 120h1v1h-1zM487 128h1v1h-1zM487 136h1v1h-1zM487 144h1v1h-1zM487 152h1v1h-1zM487 160h1v1h-1zM487 168h1v1h-1zM487 176h1v1h-1zM487 184h1v1h-1zM487 192h1v1h-1zM487 200h1v1h-1zM487 208h1v1h-1zM487 216h1v1h-1zM487 224h1v1h-1zM487 232h1v1h-1zM487 240h1v1h-1zM487 248h1v1h-1zM487 256h1v1h-1zM487 264h1v1h-1zM487 272h1v1h-1zM487 280h1v1h-1zM487 288h1v1h-1zM487 296h1v1h-1zM487 304h1v1h-1zM487 312h1v1h-1zM487 320h1v1h-1zM487 328h1v1h-1zM487 336h1v1h-1zM487 344h1v1h-1zM487 352h1v1h-1zM487 360h1v1h-1zM487 368h1v1h-1zM487 376h1v1h-1zM487 384h1v1h-1zM487 392h1v1h-1zM487 400h1v1h-1zM487 408h1v1h-1zM487 416h1v1h-1zM487 424h1v1h-1zM487 432h1v1h-1zM487 440h1v1h-1zM487 448h1v1h-1zM487 456h1v1h-1zM487 464h1v1h-1zM487 472h1v1h-1zM487 480h1v1h-1zM487 488h1v1h-1zM487 496h1v1h-1zM487 504h1v1h-1zM487 512h1v1h-1z" fill="#d0a0d0" shape-rendering="crispEdges"/>
<!-- waveforms -->
<path d="M22.5 370V373M23.5 370V372M24.5 369V372M25.5 370V372M26.5 370V372M27.5 369V372M28.5 370V372M29.5 370V372M30.5 370V372M31.5 369V372M32.5 370V372M33.5 370V372M34.5 369V372M35.5 369V372M36.5 370V372M37.5 370V372M38.5 369V372M39.5 370V372M40.5 370V372M41.5 369V372M42.5 370V372M43.5 369V372M44.5 369V372M45.5 370V372M46.5 370V372M47.5 370V372M48.5 369V373M49.5 370V372M50.5 369V372M51.5 370V372M52.5 369V372M53.5 370V372M54.5 370V373M55.5 370V372M56.5 370V372M57.5 370V372M58.5 369V372M59.5 369V372M60.5 370V372M61.5 369V372M62.5 370V372M63.5 369V372M64.5 370V372M65.5 370V372M66.5 370V372M67.5 370V372M68.5 370V372M69.5 369V373M70.5 370V372M71.5 370V372M72.5 370V372M73.5 370V372M74.5 369V372M75.5 370V372M76.5 370V372M77.5 370V372M78.5 369V373M79.5 370V372M80.5 370V373M81.5 370V372M82.5 370V372M83.5 369V372M84.5 370V372M85.5 370V372M86.5 370V372M87.5 370V372M88.5 369V372M89.5 370V372M90.5 369V372M91.5 370V372M92.5 370V372M93.5 370V372M94.5 370V372M95.5 370V372M96.5 370V372M97.5 369V372M98.5 370V372M99.5 370V372M100.5 370V372M101.5 369V372M102.5 370V372M103.5 369V372M104.5 370V372M105.5 370V372M106.5 370V372M107.5 369V372M108.5 370V372M109.5 369V372M110.5 369V372M111.5 370V372M112.5 370V372M113.5 369V372M114.5 369V372M115.5 370V372M116.5 370V372M117.5 370V372M118.5 370V372M119.5 370V372M120.5 370V372M121.5 369V372M122.5 370V372M123.5 370V372M124.5 370V372M125.5 370V373M126.5 369V372M127.5 369V372M128.5 369V372M129.5 370V372M130.5 370V372M131.5 370V372M132.5 370V372M133.5 369V372M134.5 370V374M135.5 370V374M136.5 369V374M137.5 370V372M138.5 370V373M139.5 370V372M140.5 370V372M141.5 369V372M142.5 370V372M143.5 369V372M144.5 370V372M145.5 369V373M146.5 369V372M147.5 369V372M148.5 369V372M149.5 370V372M150.5 370V372M151.5 370V372M152.5 370V373M153.5 370V372M154.5 370V372M155.5 370V373M156.5 369V372M157.5 370V372M158.5 370V372M159.5 370V372M160.5 370V372M161.5 369V372M162.5 369V372M163.5 370V373M164.5 369V372M165.5 370V372M166.5 370V372M167.5 369V372M168.5 370V373M169.5 370V372M170.5 369V372M171.5 370V372M172.5 369V372M173.5 369V372M174.5 370V372M175.5 370V373M176.5 370V372M177.5 370V372M178.5 370V372M179.5 370V372M180.5 370V372M181.5 370V372M182.5 370V372M183.5 370V372M184.5 370V372M185.5 370V372M186.5 369V372M187.5 370V372M188.5 370V372M189.5 369V372M190.5 370V372M191.5 369V372M192.5 370V372M193.5 370V372M194.5 369V372M195.5 370V372M196.5 370V372M197.5 370V372M198.5 370V372M199.5 369V372M200.5 370V372M201.5 370V372M202.5 370V372M203.5 369V372M204.5 370V372M205.5 369V373M206.5 369V372M207.5 370V372M208.5 370V372M209.5 370V372M210.5 370V372M211.5 370V372M212.5 370V372M213.5 370V372M214.5 370V372M215.5 369V372M216.5 370V372M217.5 370V372M218.5 370V372M219.5 370V372M220.5 370V372M221.5 369V372M222.5 369V372M223.5 370V372M224.5 370V372M225.5 370V373M226.5 370V372M227.5 370V373M228.5 370V372M229.5 370V372M230.5 369V372M231.5 370V372M232.5 370V372M233.5 370V372M234.5 370V372M235.5 370V372M236.5 370V372M237.5 370V372M238.5 370V372M239.5 370V372M240.5 370V372M241.5 370V372M242.5 369V373M243.5 370V372M244.5 370V372M245.5 370V372M246.5 370V372M247.5 369V372M248.5 369V372M249.5 370V372M250.5 370V372M251.5 369V372M252.5 370V372M253.5 369V373M254.5 370V372M255.5 370V372M256.5 370V372M257.5 370V374M258.5 370V374M259.5 369V374M260.5 369V372M261.5 370V372M262.5 369V372M263.5 370V372M264.5 370V372M265.5 369V372M266.5 369V372M267.5 369V372M268.5 370V372M269.5 369V372M270.5 369V372M271.5 369V372M272.5 370V372M273.5 370V372M274.5 369V372M275.5 370V372M276.5 369V372M277.5 370V372M278.5 370V372M279.5 369V372M280.5 370V372M281.5 370V372M282.5 370V372M283.5 369V373M284.5 369V372M285.5 369V372M286.5 369V372M287.5 369V372M288.5 370V372M289.5 370V372M290.5 370V372M291.5 370V373M292.5 369V372M293.5 370V373M294.5 370V372M295.5 370V372M296.5 369V372M297.5 370V372M298.5 369V372M299.5 369V372M300.5 369V372M301.5 369V372M302.5 370V372M303.5 370V372M304.5 370V372M305.5 369V372M306.5 370V372M307.5 369V372M308.5 369V372M309.5 369V372M310.5 370V372M311.5 370V373M312.5 370V372M313.5 370V372M314.5 370V372M315.5 370V372M316.5 370V372M317.5 370V372M318.5 370V372M319.5 370V372M320.5 370V373M321.5 370V372M322.5 369V372M323.5 370V372M324.5 369V372M325.5 370V372M326.5 370V373M327.5 370V372M328.5 370V372M329.5 370V372M330.5 369V372M331.5 370V372M332.5 370V372M333.5 369V372M334.5 370V372M335.5 370V372M336.5 370V372M337.5 370V372M338.5 370V372M339.5 369V372M340.5 369V372M341.5 370V372M342.5 370V372M343.5 369V372M344.5 370V372M345.5 370V372M346.5 370V372M347.5 369V372M348.5 370V372M349.5 370V372M350.5 370V373M351.5 370V372M352.5 370V372M353.5 369V372M354.5 369V372M355.5 370V372M356.5 370V372M357.5 370V372M358.5 370V372M359.5 370V372M360.5 370V372M361.5 370V372M362.5 370V372M363.5 370V372M364.5 370V373M365.5 370V471M366.5 447V464M367.5 448V462M368.5 449V460M369.5 450V459M370.5 450V458M371.5 451V457M372.5 451V456M373.5 451V456M374.5 451V455M375.5 451V454M376.5 451V455M377.5 452V455M378.5 451V455M379.5 452V455M380.5 452V454M381.5 451V454M382.5 452V454M383.5 451V455M384.5 451V454M385.5 452V455M386.5 451V454M387.5 452V454M388.5 451V454M389.5 452V455M390.5 452V454M391.5 451V454M392.5 451V455M393.5 452V454M394.5 452V454M395.5 452V454M396.5 451V454M397.5 451V454M398.5 452V454M399.5 451V454M400.5 451V454M401.5 452V454M402.5 452V454M403.5 451V455M404.5 452V454M405.5 452V454M406.5 451V455M407.5 451V454M408.5 451V455M409.5 452V454M410.5 451V454M411.5 452V454M412.5 451V454M413.5 451V454M414.5 452V454M415.5 452V455M416.5 451V454M417.5 451V454M418.5 451V455M419.5 451V455M420.5 452V454M421.5 452V454M422.5 451V455M423.5 452V454M424.5 452V455M425.5 451V455M426.5 452V454M427.5 451V454M428.5 452V454M429.5 452V455M430.5 452V454M431.5 451V455M432.5 452V454M433.5 452V455M434.5 451V454M435.5 451V454M436.5 452V454M437.5 451V454M438.5 451V454M439.5 451V454M440.5 452V455M441.5 452V455M442.5 452V455M443.5 452V454M444.5 452V454M445.5 452V454M446.5 451V455M447.5 452V455M448.5 447V463M449.5 446V459M450.5 437V459M451.5 440V465M452.5 447V460M453.5 447V459M454.5 446V459M455.5 441V463M456.5 441V460M457.5 447V458M458.5 448V457M459.5 449V456M460.5 451V455M461.5 452V455M462.5 451V455M463.5 452V454M464.5 451V454M465.5 451V454M466.5 452V455M467.5 451V454M468.5 451V454M469.5 451V455M470.5 452V455M471.5 452V455M472.5 452V455M473.5 452V455M474.5 452V454M475.5 451V455M476.5 451V454M477.5 451V454M478.5 451V454M479.5 452V454M480.5 452V455M481.5 452V455M482.5 452V454M483.5 452V454M484.5 451V455M485.5 452V454M486.5 452V455M487.5 451V454M488.5 452V454M489.5 451V455M490.5 451V454M491.5 452V455M492.5 452V455M493.5 450V456M494.5 450V456M495.5 450V456M496.5 452V455M497.5 450V456M498.5 451V454M499.5 450V456M500.5 452V455M501.5 450V456M502.5 450V456M503.5 450V456M504.5 450V456M505.5 451V455M506.5 450V456M507.5 450V456M508.5 452V454M509.5 451V455M510.5 451V456M511.5 451V454M512.5 452V455M513.5 451V454M514.5 452V455M515.5 451V456M516.5 451V456M517.5 452V455M518.5 451V454M519.5 452V456M520.5 452V456M521.5 452V454M522.5 451V454M523.5 452V455M524.5 451V456M525.5 451V454M526.5 451V456M527.5 451V455M528.5 452V454M529.5 451V454M530.5 452V454M531.5 451V454M532.5 452V454M533.5 451V454M534.5 451V455M535.5 452V454M536.5 452V455M537.5 452V454M538.5 452V454M539.5 452V454M540.5 452V454M541.5 452V454M542.5 452V455M543.5 452V454M544.5 452V455M545.5 452V454M546.5 451V454M547.5 451V455M548.5 451V455M549.5 451V454M550.5 452V454M551.5 451V454M552.5 452V454M553.5 452V454M554.5 451V455M555.5 452V454M556.5 451V454M557.5 452V454M558.5 451V454M559.5 451V455M560.5 452V454M561.5 452V454M562.5 451V455M563.5 451V454M564.5 452V455M565.5 451V455M566.5 452V454M567.5 452V454M568.5 451V454M569.5 451V454M570.5 451V455M571.5 452V454M572.5 451V454M573.5 452V454M574.5 451V454M575.5 452V454M576.5 452V455M577.5 452V455M578.5 452V455M579.5 451V454M580.5 451V454M581.5 451V454M582.5 451V454M583.5 452V454M584.5 451V454M585.5 452V454M586.5 451V454M587.5 451V454M588.5 451V454M589.5 452V454M590.5 452V454M591.5 452V454M592.5 451V454M593.5 451V454M594.5 452V454M595.5 451V454M596.5 452V454M597.5 452V455M598.5 451V455M599.5 452V454M600.5 451V454M601.5 452V455M602.5 451V454M603.5 452V455M604.5 452V455M605.5 452V454M606.5 452V454M607.5 452V454M608.5 451V454M609.5 452V454M610.5 451V455M611.5 452V454M612.5 452V455M613.5 451V454M614.5 452V455M615.5 452V455M616.5 451V455M617.5 451V454M618.5 452V454M619.5 451V455M620.5 452V455M621.5 451V454M622.5 451V455M623.5 451V454M624.5 452V455M625.5 451V454M626.5 451V454M627.5 452V454M628.5 451V455M629.5 452V454M630.5 452V454M631.5 452V455M632.5 451V454M633.5 452V455M634.5 452V455M635.5 452V455M636.5 452V454M637.5 451V454M638.5 451V455M639.5 451V454M640.5 452V454M641.5 451V454M642.5 451V455M643.5 452V454M644.5 452V454M645.5 452V454M646.5 452V454M647.5 451V454M648.5 452V455M649.5 451V454M650.5 452V454M651.5 452V454M652.5 451V455M653.5 451V454M654.5 452V454M655.5 452V454M656.5 451V454M657.5 451V454M658.5 452V454M659.5 451V454M660.5 452V454M661.5 452V454M662.5 452V454M663.5 452V454M664.5 451V454M665.5 452V454M666.5 451V455M667.5 452V454M668.5 451V455M669.5 451V455M670.5 452V454M671.5 452V454M672.5 452V455M673.5 452V455M674.5 451V454M675.5 451V455M676.5 451V454M677.5 452V454M678.5 451V454M679.5 451V455M680.5 452V455M681.5 451V454M682.5 451V454M683.5 451V454M684.5 452V454M685.5 451V454M686.5 451V454M687.5 451V455M688.5 452V454M689.5 452V454M690.5 452V454M691.5 451V454M692.5 452V454M693.5 452V455M694.5 452V455M695.5 451V455M696.5 451V454M697.5 452V454M698.5 451V455M699.5 451V455M700.5 451V454M701.5 452V454M702.5 451V454M703.5 451V455M704.5 452V454M705.5 452V454M706.5 452V454M707.5 452V454M708.5 451V455M709.5 451V454M710.5 452V454M711.5 451V454M712.5 451V454M713.5 452V455M714.5 451V455M715.5 451V454M716.5 452V454M717.5 451V455M718.5 451V454M719.5 451V454M720.5 452V454M721.5 451V454M722.5 451V455M723.5 452V454M724.5 451V455M725.5 451V454M726.5 452V454M727.5 452V454M728.5 452V454M729.5 452V454M730.5 451V455M731.5 451V454M732.5 451V455M733.5 452V454M734.5 451V455M735.5 452V454M736.5 451V455M737.5 452V454M738.5 451V454M739.5 451V455M740.5 452V454M741.5 451V454M742.5 451V455M743.5 451V454M744.5 452V454M745.5 451V455M746.5 452V455M747.5 451V454M748.5 452V454M749.5 451V454M750.5 452V454M751.5 451V454M752.5 452V455M753.5 451V454M754.5 451V454M755.5 452V454M756.5 452V454M757.5 451V455M758.5 452V454M759.5 451V455M760.5 451V454M761.5 451V454M762.5 452V454M763.5 452V455M764.5 451V455M765.5 452V455M766.5 452V454M767.5 451V454M768.5 451V454M769.5 451V454M770.5 452V454M771.5 451V454M772.5 452V454M773.5 452V454M774.5 452V454M775.5 451V455M776.5 452V455M777.5 451V455" stroke="#e8e030" stroke-width="1" fill="none" shape-rendering="crispEdges"/>
<path d="M22.5 184V198M23.5 183V191M24.5 186V197M25.5 188V198M26.5 184V193M27.5 185V192M28.5 187V195M29.5 188V193M30.5 187V193M31.5 188V193M32.5 187V193M33.5 187V192M34.5 188V192M35.5 188V193M36.5 187V193M37.5 187V192M38.5 188V193M39.5 188V193M40.5 188V193M41.5 187V192M42.5 188V193M43.5 187V192M44.5 187V192M45.5 188V193M46.5 188V193M47.5 188V192M48.5 188V192M49.5 185V192M50.5 188V193M51.5 188V193M52.5 187V193M53.5 187V192M54.5 188V193M55.5 184V192M56.5 187V193M57.5 187V193M58.5 188V192M59.5 188V192M60.5 187V193M61.5 188V193M62.5 187V192M63.5 188V193M64.5 188V192M65.5 187V193M66.5 187V193M67.5 188V192M68.5 188V193M69.5 188V193M70.5 188V192M71.5 187V192M72.5 188V192M73.5 187V193M74.5 188V192M75.5 188V193M76.5 188V192M77.5 187V193M78.5 188V195M79.5 187V192M80.5 187V192M81.5 187V192M82.5 188V193M83.5 184V192M84.5 188V193M85.5 188V193M86.5 187V192M87.5 188V193M88.5 187V193M89.5 188V193M90.5 188V193M91.5 188V193M92.5 186V192M93.5 188V192M94.5 188V193M95.5 188V193M96.5 186V193M97.5 188V192M98.5 188V192M99.5 188V192M100.5 188V192M101.5 188V192M102.5 187V193M103.5 187V192M104.5 187V192M105.5 188V192M106.5 187V193M107.5 187V193M108.5 187V196M109.5 188V192M110.5 187V192M111.5 187V192M112.5 188V193M113.5 188V192M114.5 188V192M115.5 187V192M116.5 187V193M117.5 188V193M118.5 187V192M119.5 188V193M120.5 188V193M121.5 188V192M122.5 188V193M123.5 187V193M124.5 188V193M125.5 188V192M126.5 188V193M127.5 187V192M128.5 188V195M129.5 188V193M130.5 188V192M131.5 187V193M132.5 187V193M133.5 187V194M134.5 182V198M135.5 176V200M136.5 171V203M137.5 180V201M138.5 183V198M139.5 180V201M140.5 177V205M141.5 182V206M142.5 185V199M143.5 187V193M144.5 186V195M145.5 187V193M146.5 185V192M147.5 187V192M148.5 188V193M149.5 187V192M150.5 188V192M151.5 188V193M152.5 188V193M153.5 188V192M154.5 187V192M155.5 188V195M156.5 187V193M157.5 188V192M158.5 187V192M159.5 188V192M160.5 187V193M161.5 187V192M162.5 187V193M163.5 188V192M164.5 187V192M165.5 187V193M166.5 188V192M167.5 188V193M168.5 187V194M169.5 187V192M170.5 187V192M171.5 187V192M172.5 188V192M173.5 187V193M174.5 187V192M175.5 188V193M176.5 187V193M177.5 185V193M178.5 187V193M179.5 187V194M180.5 187V192M181.5 188V193M182.5 185V193M183.5 188V192M184.5 188V193M185.5 188V193M186.5 187V193M187.5 188V192M188.5 188V192M189.5 187V192M190.5 188V193M191.5 188V193M192.5 187V193M193.5 187V192M194.5 187V193M195.5 188V193M196.5 188V192M197.5 187V192M198.5 188V192M199.5 188V192M200.5 187V192M201.5 188V193M202.5 187V192M203.5 188V192M204.5 188V193M205.5 187V192M206.5 188V193M207.5 187V192M208.5 188V193M209.5 187V193M210.5 186V192M211.5 187V193M212.5 187V193M213.5 187V193M214.5 188V193M215.5 188V193M216.5 188V193M217.5 187V192M218.5 187V193M219.5 187V193M220.5 187V193M221.5 188V192M222.5 188V193M223.5 188V193M224.5 184V192M225.5 181V191M226.5 185V190M227.5 185V190M228.5 185V190M229.5 186V190M230.5 185V191M231.5 185V191M232.5 185V194M233.5 186V194M234.5 186V191M235.5 185V190M236.5 186V190M237.5 186V191M238.5 186V191M239.5 186V190M240.5 185V191M241.5 186V190M242.5 185V191M243.5 185V190M244.5 187V193M245.5 188V192M246.5 187V193M247.5 187V193M248.5 187V192M249.5 187V193M250.5 186V193M251.5 188V194M252.5 187V193M253.5 187V193M254.5 188V195M255.5 188V192M256.5 187V194M257.5 182V199M258.5 185V193M259.5 184V197M260.5 186V193M261.5 186V196M262.5 186V193M263.5 181V199M264.5 186V192M265.5 185V198M266.5 186V193M267.5 186V194M268.5 186V197M269.5 186V193M270.5 188V193M271.5 187V194M272.5 185V194M273.5 187V193M274.5 188V193M275.5 187V194M276.5 187V195M277.5 188V195M278.5 187V193M279.5 187V193M280.5 186V196M281.5 185V194M282.5 185V194M283.5 182V200M284.5 179V202M285.5 183V200M286.5 187V194M287.5 186V194M288.5 186V193M289.5 186V195M290.5 183V196M291.5 186V194M292.5 187V194M293.5 188V192M294.5 187V192M295.5 188V192M296.5 188V193M297.5 187V192M298.5 187V192M299.5 187V192M300.5 188V193M301.5 187V193M302.5 188V192M303.5 188V193M304.5 187V192M305.5 188V193M306.5 187V192M307.5 188V193M308.5 184V192M309.5 188V192M310.5 186V193M311.5 188V195M312.5 186V192M313.5 187V192M314.5 187V193M315.5 187V193M316.5 188V193M317.5 187V192M318.5 188V192M319.5 188V192M320.5 186V193M321.5 184V192M322.5 187V193M323.5 188V193M324.5 187V192M325.5 188V192M326.5 188V193M327.5 188V193M328.5 188V192M329.5 187V192M330.5 188V192M331.5 188V193M332.5 188V192M333.5 188V193M334.5 187V192M335.5 188V192M336.5 187V193M337.5 188V192M338.5 187V193M339.5 188V194M340.5 186V192M341.5 187V192M342.5 188V192M343.5 188V192M344.5 187V193M345.5 188V192M346.5 187V193M347.5 185V193M348.5 187V192M349.5 188V193M350.5 188V193M351.5 188V193M352.5 188V192M353.5 188V193M354.5 187V193M355.5 188V192M356.5 188V193M357.5 187V193M358.5 188V192M359.5 187V193M360.5 188V193M361.5 187V194M362.5 187V197M363.5 184V206M364.5 128V231M365.5 123V266M366.5 140V251M367.5 150V236M368.5 152V229M369.5 155V223M370.5 159V217M371.5 165V211M372.5 171V207M373.5 177V206M374.5 183V205M375.5 180V207M376.5 175V207M377.5 173V204M378.5 178V199M379.5 182V204M380.5 184V209M381.5 180V211M382.5 177V211M383.5 182V205M384.5 187V199M385.5 183V204M386.5 178V208M387.5 177V210M388.5 179V210M389.5 182V206M390.5 185V201M391.5 182V198M392.5 180V197M393.5 185V196M394.5 189V196M395.5 188V195M396.5 186V196M397.5 187V194M398.5 187V194M399.5 187V194M400.5 188V193M401.5 188V193M402.5 188V193M403.5 188V192M404.5 187V192M405.5 187V192M406.5 188V192M407.5 187V193M408.5 188V192M409.5 187V193M410.5 187V193M411.5 187V194M412.5 188V192M413.5 187V192M414.5 188V193M415.5 187V193M416.5 188V192M417.5 188V193M418.5 187V193M419.5 188V193M420.5 188V193M421.5 187V192M422.5 185V192M423.5 188V192M424.5 188V193M425.5 187V192M426.5 188V193M427.5 188V192M428.5 188V193M429.5 187V192M430.5 188V193M431.5 188V192M432.5 188V193M433.5 188V193M434.5 188V193M435.5 188V193M436.5 188V192M437.5 187V192M438.5 188V193M439.5 187V192M440.5 188V193M441.5 187V193M442.5 187V192M443.5 188V192M444.5 187V192M445.5 187V194M446.5 186V199M447.5 174V217M448.5 160V231M449.5 113V237M450.5 112V239M451.5 153V240M452.5 150V239M453.5 170V237M454.5 165V243M455.5 125V237M456.5 156V225M457.5 160V211M458.5 170V202M459.5 171V207M460.5 178V209M461.5 180V201M462.5 175V197M463.5 182V198M464.5 187V196M465.5 188V197M466.5 186V197M467.5 186V195M468.5 185V196M469.5 186V195M470.5 183V197M471.5 186V197M472.5 186V199M473.5 187V194M474.5 187V194M475.5 188V192M476.5 188V193M477.5 188V193M478.5 188V193M479.5 188V192M480.5 188V192M481.5 188V193M482.5 187V192M483.5 186V192M484.5 188V193M485.5 185V192M486.5 187V193M487.5 188V192M488.5 187V193M489.5 187V193M490.5 188V193M491.5 187V194M492.5 184V198M493.5 178V205M494.5 171V211M495.5 182V200M496.5 174V209M497.5 175V200M498.5 168V213M499.5 168V200M500.5 165V215M501.5 170V204M502.5 172V211M503.5 178V202M504.5 175V207M505.5 182V199M506.5 182V201M507.5 187V195M508.5 189V196M509.5 188V194M510.5 188V194M511.5 185V201M512.5 182V206M513.5 182V197M514.5 180V205M515.5 182V201M516.5 178V206M517.5 184V198M518.5 183V203M519.5 186V201M520.5 184V200M521.5 178V205M522.5 177V198M523.5 172V207M524.5 184V202M525.5 177V203M526.5 182V196M527.5 181V198M528.5 184V197M529.5 186V194M530.5 185V196M531.5 186V194M532.5 187V194M533.5 188V196M534.5 188V195M535.5 187V194M536.5 187V194M537.5 187V193M538.5 188V193M539.5 188V193M540.5 187V192M541.5 188V193M542.5 187V193M543.5 187V193M544.5 188V193M545.5 181V194M546.5 188V193M547.5 187V192M548.5 188V192M549.5 187V193M550.5 188V192M551.5 188V192M552.5 187V192M553.5 187V192M554.5 187V192M555.5 187V194M556.5 185V196M557.5 178V197M558.5 171V198M559.5 174V201M560.5 180V201M561.5 183V199M562.5 186V196M563.5 177V195M564.5 182V197M565.5 187V193M566.5 185V194M567.5 186V194M568.5 183V195M569.5 187V192M570.5 180V196M571.5 177V196M572.5 184V195M573.5 186V193M574.5 187V194M575.5 188V193M576.5 188V192M577.5 187V192M578.5 188V192M579.5 188V192M580.5 187V192M581.5 187V193M582.5 186V192M583.5 187V192M584.5 188V192M585.5 188V192M586.5 187V192M587.5 187V194M588.5 187V193M589.5 187V192M590.5 187V193M591.5 188V192M592.5 187V192M593.5 187V193M594.5 185V193M595.5 188V192M596.5 188V193M597.5 187V192M598.5 188V193M599.5 188V194M600.5 188V194M601.5 187V192M602.5 188V194M603.5 188V193M604.5 187V193M605.5 188V193M606.5 188V193M607.5 187V192M608.5 188V192M609.5 187V192M610.5 188V193M611.5 188V193M612.5 188V192M613.5 187V193M614.5 188V193M615.5 187V192M616.5 187V192M617.5 187V194M618.5 186V199M619.5 175V203M620.5 182V197M621.5 183V201M622.5 186V199M623.5 179V206M624.5 184V203M625.5 187V194M626.5 187V194M627.5 188V192M628.5 187V192M629.5 184V192M630.5 187V193M631.5 187V193M632.5 188V193M633.5 188V193M634.5 188V193M635.5 188V192M636.5 187V193M637.5 188V193M638.5 188V194M639.5 187V192M640.5 188V193M641.5 188V193M642.5 187V193M643.5 188V192M644.5 188V193M645.5 187V193M646.5 187V193M647.5 183V194M648.5 188V193M649.5 188V193M650.5 187V193M651.5 188V192M652.5 188V192M653.5 188V193M654.5 187V192M655.5 188V193M656.5 187V193M657.5 188V192M658.5 187V192M659.5 188V193M660.5 187V193M661.5 187V192M662.5 187V193M663.5 187V192M664.5 187V192M665.5 187V192M666.5 187V193M667.5 188V192M668.5 188V192M669.5 187V193M670.5 187V193M671.5 188V192M672.5 188V193M673.5 188V193M674.5 188V195M675.5 187V192M676.5 187V192M677.5 187V192M678.5 188V192M679.5 188V192M680.5 189V194M681.5 188V193M682.5 188V193M683.5 188V193M684.5 188V194M685.5 188V194M686.5 189V194M687.5 189V193M688.5 188V193M689.5 188V193M690.5 188V193M691.5 188V194M692.5 189V193M693.5 189V195M694.5 189V194M695.5 189V193M696.5 189V194M697.5 188V195M698.5 186V198M699.5 188V194M700.5 183V199M701.5 179V203M702.5 185V200M703.5 188V195M704.5 186V197M705.5 188V196M706.5 188V195M707.5 189V193M708.5 189V193M709.5 189V193M710.5 189V194M711.5 189V193M712.5 189V193M713.5 189V194M714.5 186V193M715.5 187V194M716.5 189V194M717.5 189V193M718.5 188V193M719.5 188V193M720.5 186V194M721.5 189V194M722.5 188V193M723.5 188V194M724.5 189V193M725.5 188V194M726.5 188V193M727.5 189V193M728.5 188V194M729.5 188V193M730.5 188V194M731.5 189V194M732.5 189V194M733.5 188V193M734.5 188V197M735.5 188V193M736.5 188V193M737.5 188V195M738.5 187V198M739.5 189V195M740.5 183V203M741.5 187V195M742.5 185V204M743.5 187V195M744.5 183V201M745.5 187V195M746.5 184V203M747.5 186V194M748.5 186V199M749.5 185V193M750.5 188V196M751.5 187V194M752.5 186V198M753.5 187V195M754.5 189V195M755.5 186V194M756.5 186V194M757.5 186V199M758.5 187V195M759.5 188V195M760.5 188V195M761.5 187V196M762.5 187V193M763.5 187V198M764.5 187V196M765.5 187V194M766.5 189V195M767.5 189V195M768.5 188V194M769.5 186V198M770.5 188V196M771.5 187V194M772.5 188V196M773.5 187V196M774.5 187V193M775.5 186V199M776.5 189V195M777.5 188V195" stroke="#e00c0c" stroke-width="1" fill="none" shape-rendering="crispEdges"/>
<!-- trigger T marker -->
<path d="M359.5 20.5h12v10.5l-6 3.5l-6-3.5z" fill="#000" stroke="#9038c8" stroke-width="1.6"/>
<path d="M361 24h9v1.4h-3.8v6h-1.4v-6h-3.8z" fill="#a838d8"/>
<rect x="429" y="19" width="1" height="2" fill="#e0b0e0"/>
<rect x="487" y="19" width="1" height="2" fill="#e0b0e0"/>
<!-- ch markers -->
<path d="M0.5 176.2h14l4 7.8l-4 7.8h-14z" fill="#000" stroke="#a82020" stroke-width="1.1"/>
<path d="M5.6 182.2L9 179.2V189.8" fill="none" stroke="#e82020" stroke-width="2"/>
<path d="M0.5 441.5h13l5.5 8l-5.5 8h-13z" fill="#000" stroke="#e8e040" stroke-width="1.2"/>
<text x="8" y="454.5" fill="#e8e040" class="cd" style="font-size:14px">2</text>
<path d="M782 413.5l11.5-5.5v11z" fill="#a020e0"/>

<!-- measurement box -->
<rect x="26" y="426.5" width="186" height="91" rx="3.5" fill="#000" stroke="#78a8c0" stroke-width="2"/>
<g fill="none" stroke="#f0f0f0" stroke-width="1.1">
<path d="M34.5 440.5l4-6.5l4 6.5z"/>
<path d="M54.5 462.5l4-6.5l4 6.5z"/>
</g>
<text x="44" y="441.7" fill="#f2f2f2">x:2.320us</text>
<text x="34" y="463.6" fill="#f2f2f2">1/ x:431.0KHZ</text>
<text x="33" y="488" fill="#f2f2f2">x1:-2.560us</text>
<text x="33" y="509.7" fill="#f2f2f2">x2:-4.880us</text>

<!-- bottom left area -->
<rect x="0" y="519" width="319" height="81" fill="#6eaac0"/>
<rect x="1.5" y="520" width="207" height="18.5" rx="3" fill="#000"/>
<rect x="1.5" y="540.5" width="207" height="18" rx="3" fill="#000"/>
<rect x="211" y="519.5" width="106" height="39" rx="4" fill="#000"/>
<rect x="1.5" y="561" width="316" height="37" rx="4" fill="#000"/>
<circle cx="10" cy="530" r="7.6" fill="#e00000"/>
<path d="M7.7 528.2L10.5 525.3V535.1" fill="none" stroke="#380000" stroke-width="1.7"/>
<text x="18.2" y="535.6" fill="#d82424">50.0mV~  1.72div</text>
<circle cx="10" cy="549.5" r="7.6" fill="#e8e020"/>
<text x="10.3" y="554.5" fill="#000" class="cd">2</text>
<text x="18.2" y="555.5" fill="#e0e040">2VBW-    -3.60div</text>
<text x="218" y="533.7" fill="#f2f2f2">(250MS/s)</text>
<text x="218" y="553.2" fill="#f2f2f2">Depth:10K</text>
<circle cx="9.6" cy="570.5" r="7.7" fill="#e00000"/>
<path d="M7.3 568.7L10.1 565.8V575.6" fill="none" stroke="#380000" stroke-width="1.7"/>
<text x="21" y="574.5" fill="#d82424">Vp:156.0mv</text>
<circle cx="9.6" cy="589.6" r="7.7" fill="#e00000"/>
<path d="M7.3 587.7L10.1 584.8V594.6" fill="none" stroke="#380000" stroke-width="1.7"/>
<text x="21" y="594" fill="#d82424">+D:99.2%</text>
<circle cx="168.3" cy="570.5" r="7.7" fill="#e00000"/>
<path d="M166.0 568.7L168.8 565.8V575.6" fill="none" stroke="#380000" stroke-width="1.7"/>
<text x="181" y="574.5" fill="#d82424">F:  ?</text>
<circle cx="168.3" cy="589.6" r="7.7" fill="#e8e020"/>
<text x="168.60000000000002" y="594.5" fill="#000" class="cd">2</text>
<text x="181" y="594" fill="#e0e040">F:  ?</text>

<!-- bottom right area -->
<rect x="319" y="538" width="478" height="60" fill="#0562a4"/>
<rect x="319" y="538" width="478" height="2" fill="#0556a0"/>
<rect x="319.5" y="520" width="98.5" height="17.5" rx="8.75" fill="#000"/>
<text x="333" y="533.7" fill="#f2f2f2">M:2.0us</text>
<rect x="664.5" y="520" width="129.5" height="17.5" rx="8.75" fill="#000"/>
<circle cx="676.3" cy="528.8" r="8.2" fill="#e8e020"/>
<text x="676.3" y="533.5" fill="#000" class="cd">2</text>
<path d="M686 522.5h8l6 13h5" fill="none" stroke="#f0f0f0" stroke-width="1.2"/>
<text x="707" y="534.5" fill="#f2f2f2">1.44V</text>
<!-- buttons -->
<rect x="321" y="539.5" width="91" height="57" rx="2.5" fill="#0846a0"/>
<rect x="323" y="541" width="87" height="53.5" rx="2" fill="#5aaaf0"/>
<rect x="324.5" y="542.5" width="85.5" height="52" rx="1.5" fill="#0a7ee2"/>
<text x="346" y="561.5" fill="#102060">Type</text>
<rect x="341" y="571" width="50" height="20" fill="#e4e4e4"/>
<text x="342" y="585.5" fill="#000">Image</text>
<rect x="596" y="539.5" width="91.5" height="57" rx="2.5" fill="#0846a0"/>
<rect x="598" y="541" width="87.5" height="53.5" rx="2" fill="#5aaaf0"/>
<rect x="599.5" y="542.5" width="86" height="52" rx="1.5" fill="#0a7ee2"/>
<text x="621" y="573.8" fill="#102060">Save</text>
</svg>
</body></html>
